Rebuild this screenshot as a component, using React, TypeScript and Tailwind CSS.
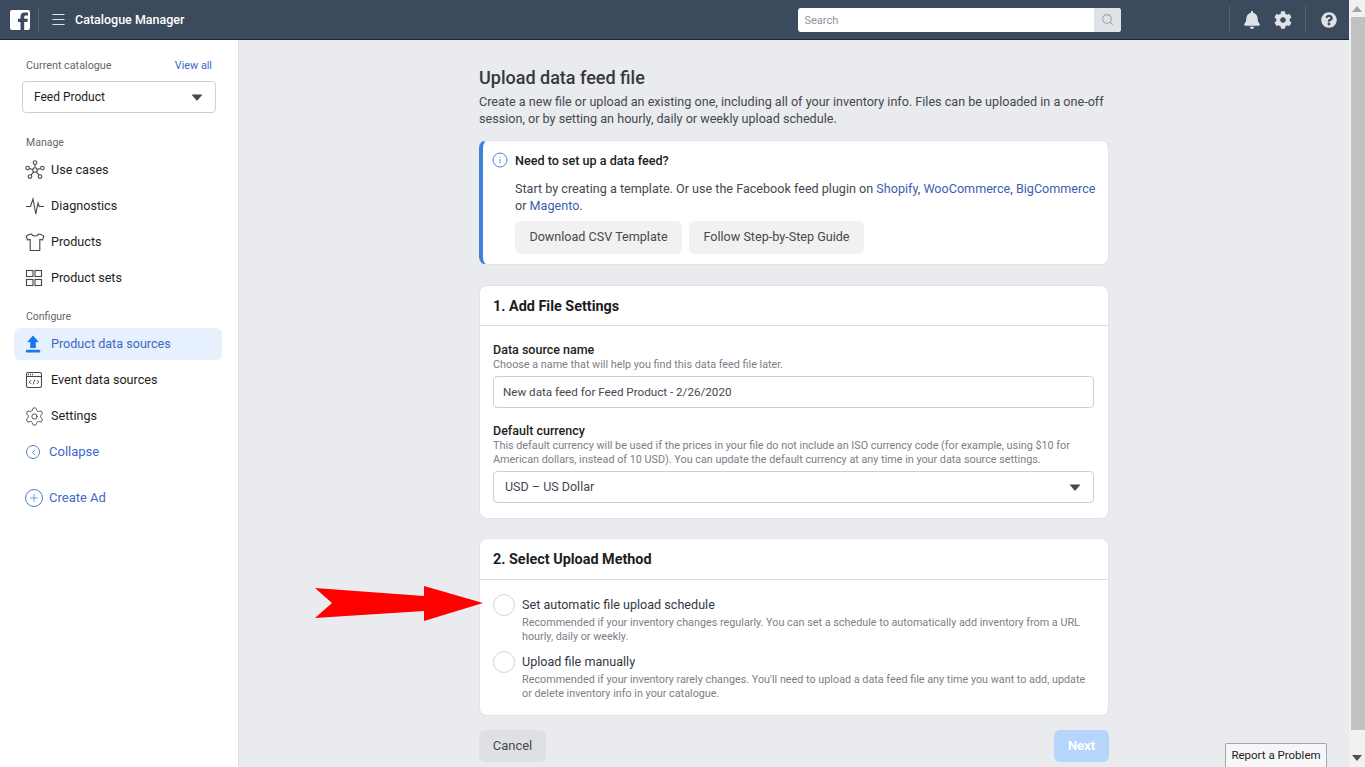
import React from 'react';
import { FaBell, FaCog, FaQuestionCircle } from 'react-icons/fa';
import { ChevronLeft, Menu, Plus, Search, Settings } from 'lucide-react';

const Caret = () => (
  <svg width="12" height="7" viewBox="0 0 12 7" className="shrink-0">
    <path d="M0.5 0.5h11L6.6 6.2a.8.8 0 0 1-1.2 0z" fill="#444950" />
  </svg>
);

const UseCasesIcon = () => (
  <svg width="20" height="20" viewBox="0 0 20 20" fill="none" stroke="#444950" strokeWidth="1.1">
    <circle cx="10" cy="10" r="2.2" />
    <circle cx="10" cy="2.6" r="1.8" />
    <circle cx="2.6" cy="8" r="1.8" />
    <circle cx="17.4" cy="8" r="1.8" />
    <circle cx="5" cy="16.6" r="1.8" />
    <circle cx="15" cy="16.6" r="1.8" />
    <path d="M10 4.4v3.4M4.4 8.5l3.5 1M15.6 8.5l-3.5 1M6 15l2.6-3.2M14 15l-2.6-3.2" />
  </svg>
);

const PulseIcon = () => (
  <svg width="20" height="20" viewBox="0 0 20 20" fill="none" stroke="#444950" strokeWidth="1.1">
    <path d="M1 10.500h4.500L8 3l2.800 15 2.200-11 1.300 3.500H19" />
  </svg>
);

const ShirtIcon = () => (
  <svg width="20" height="20" viewBox="0 0 20 20" fill="none" stroke="#444950" strokeWidth="1.1" strokeLinejoin="round">
    <path d="M6.500 2C4.500 2.300 2.500 3 1.200 4.200L2.500 8l2.700-.6V18.500h9.600V7.400l2.700.6 1.300-3.800C17.500 3 15.500 2.300 13.500 2c-.5 1.400-1.800 2-3.500 2s-3-.6-3.500-2z" />
  </svg>
);

const SetsIcon = () => (
  <svg width="18" height="18" viewBox="0 0 18 18" fill="none" stroke="#444950" strokeWidth="1.1">
    <rect x="1.500" y="1.500" width="6.500" height="6" />
    <rect x="10" y="1.500" width="6.500" height="6" />
    <rect x="1.500" y="10.500" width="6.500" height="6" />
    <rect x="10" y="10.500" width="6.500" height="6" />
  </svg>
);

const UploadIcon = () => (
  <svg width="16" height="18" viewBox="0 0 16 18" fill="#1877f2">
    <path d="M8 0.500l5.800 6.600H10.800V13H5.200V7.100H2.200z" />
    <rect x="0.800" y="14.800" width="14.400" height="2.600" rx="1.200" />
  </svg>
);

const EventIcon = () => (
  <svg width="18" height="18" viewBox="0 0 18 18" fill="none" stroke="#444950" strokeWidth="1.1">
    <rect x="1.500" y="1.500" width="15" height="15" rx="1.500" />
    <path d="M1.500 5.500h15" />
    <path d="M3 3.500h1M5 3.500h1M7 3.500h1" strokeWidth="1.3" />
    <path d="M6.200 9l-2 2 2 2M11.800 9l2 2-2 2M9.800 8.500l-1.600 5" strokeWidth="0.9" />
  </svg>
);

const Item = ({ icon, label, active }: { icon: React.ReactNode; label: string; active?: boolean }) => (
  <div className={`flex h-8 items-center rounded-md pl-[11px] text-[12.6px] ${active ? 'bg-[#e7f0fd] text-[#3b69c6]' : 'text-[#1c1e21]'}`}>
    <span className="flex w-[26px] shrink-0 justify-start">{icon}</span>
    <span>{label}</span>
  </div>
);

const Radio = () => <span className="mt-[-1px] h-[22px] w-[22px] shrink-0 rounded-full border border-[#d4d6da] bg-white" />;

const Card = ({ title, tall, children }: { title: string; tall?: boolean; children: React.ReactNode }) => (
  <section className="rounded-lg border border-[#e1e3e7] bg-white">
    <h2 className={`flex items-center border-b border-[#dadde1] px-[13px] text-[14.4px] font-bold text-[#1c1e21] ${tall ? 'h-[41px] pt-px' : 'h-10 pt-[2px]'}`}>{title}</h2>
    {children}
  </section>
);

export default function App() {
  return (
    <div className="relative flex h-[767px] w-[1365px] overflow-hidden bg-[#e9ebee] font-['Roboto',sans-serif] text-[13px]">
      <div className="flex min-w-0 flex-1 flex-col">
        {/* Top bar */}
        <header className="flex h-10 shrink-0 items-center border-b border-[#1d2733] bg-[#3b4a5c]">
          <div className="ml-[10px] h-5 w-5 overflow-hidden rounded-[2px] bg-white">
            <svg width="20" height="20" viewBox="0 0 20 20"><path d="M10.500 20v-8H8V8.800h2.500V6.500C10.500 3.800 12 2.500 14.500 2.500H18v3h-2.300c-1 0-1.500.5-1.500 1.500v1.800h3.700l-.5 3.200h-3.200v8z" fill="#3b4a5c" /></svg>
          </div>
          <div className="ml-2 h-[26px] w-px bg-[#56636f]" />
          <Menu size={17} color="#dfe3e8" strokeWidth={1.5} className="ml-[11px]" />
          <span className="ml-2 pt-px text-[12.5px] font-medium text-white">Catalogue Manager</span>
          <div className="ml-[613px] flex h-6 w-[323px] overflow-hidden rounded-[3px] bg-white">
            <span className="flex-1 pl-[7px] pt-px text-[11px] leading-6 text-[#8d949e]">Search</span>
            <span className="flex w-[27px] items-center justify-center bg-[#dfe3e8]"><Search size={13} color="#9aa3ad" /></span>
          </div>
          <div className="ml-[108px] h-[27px] w-px bg-[#56636f]" />
          <FaBell size={18} color="#dfe3e8" className="ml-[13px]" />
          <FaCog size={18} color="#dfe3e8" className="ml-[13px]" />
          <div className="ml-[13px] h-[27px] w-px bg-[#56636f]" />
          <FaQuestionCircle size={16} color="#dfe3e8" className="ml-[15px]" />
        </header>

        <div className="flex min-h-0 flex-1">
          {/* Sidebar */}
          <aside className="flex w-[239px] shrink-0 flex-col border-r border-[#dddfe2] bg-white pl-[14px] pr-4">
            <div className="mt-[19px] flex items-center justify-between pl-[12px] pr-[10px] text-[10.8px] leading-[14px]">
              <span className="text-[#606770]">Current catalogue</span>
              <span className="text-[#3b69c6]">View all</span>
            </div>
            <div className="ml-2 mt-2 flex h-8 w-[194px] items-center justify-between rounded-[4px] border border-[#ccd0d5] pl-[11px] pr-[12px] text-[12px] text-[#1c1e21]">
              Feed Product <Caret />
            </div>
            <div className="mb-1 mt-[23px] pl-[12px] text-[10.5px] leading-[14px] text-[#606770]">Manage</div>
            <div className="flex flex-col gap-1">
              <Item label="Use cases" icon={<UseCasesIcon />} />
              <Item label="Diagnostics" icon={<PulseIcon />} />
              <Item label="Products" icon={<ShirtIcon />} />
              <Item label="Product sets" icon={<SetsIcon />} />
            </div>
            <div className="mb-1 mt-4 pl-[12px] text-[10.5px] leading-[14px] text-[#606770]">Configure</div>
            <div className="flex flex-col gap-1">
              <Item active label="Product data sources" icon={<UploadIcon />} />
              <Item label="Event data sources" icon={<EventIcon />} />
              <Item label="Settings" icon={<Settings size={21} color="#444950" strokeWidth={1.1} className="ml-[-1px]" />} />
            </div>
            <div className="mt-1 flex h-8 items-center pl-[12px] text-[#3b69c6]">
              <span className="mr-[9px] flex h-[14px] w-[14px] items-center justify-center rounded-full border border-[#5b7fcc]"><ChevronLeft size={9} /></span>
              Collapse
            </div>
            <div className="mt-[14px] flex h-8 items-center pl-[11px] text-[#3b69c6]">
              <span className="mr-[6px] flex h-[18px] w-[18px] items-center justify-center rounded-full border border-[#4a80d8]"><Plus size={12} strokeWidth={1.3} /></span>
              Create Ad
            </div>
          </aside>

          {/* Main */}
          <main className="min-w-0 flex-1">
            <div className="mx-auto w-[630px] pt-[26px]">
              <h1 className="text-[18px] font-medium leading-6 text-[#333941]">Upload data feed file</h1>
              <p className="mt-[3px] text-[12.6px] leading-[17px] text-[#444950]">
                Create a new file or upload an existing one, including all of your inventory info. Files can be uploaded in a one-off session, or by setting an hourly, daily or weekly upload schedule.
              </p>

              <section className="mt-[13px] flex h-[125px] rounded-lg border border-[#e1e3e7] border-l-4 border-l-[#4080dd] bg-white pl-[9px]">
                <svg width="16" height="16" viewBox="0 0 16 16" fill="none" className="mt-[11px] shrink-0">
                  <circle cx="8" cy="8" r="7" stroke="#4a80d8" />
                  <path d="M8 7v4.500M8 4.500v1" stroke="#8fa9d8" strokeWidth="1.3" />
                </svg>
                <div className="ml-[7px] flex-1 pt-[11px] text-[12.6px] text-[#444950]">
                  <div className="font-medium leading-[17px] text-[#1c1e21]">Need to set up a data feed?</div>
                  <p className="mt-[11px] leading-[17px]">
                    Start by creating a template. Or use the Facebook feed plugin on <span className="text-[#3b5fb0]">Shopify</span>, <span className="text-[#3b5fb0]">WooCommerce</span>, <span className="text-[#3b5fb0]">BigCommerce</span> or <span className="text-[#3b5fb0]">Magento</span>.
                  </p>
                  <div className="mt-[7px] flex gap-[7px]">
                    <span className="flex h-[33px] w-[167px] items-center justify-center rounded-md bg-[#f1f1f1] text-[#444950]">Download CSV Template</span>
                    <span className="flex h-[33px] w-[175px] items-center justify-center rounded-md bg-[#f1f1f1] text-[#444950]">Follow Step-by-Step Guide</span>
                  </div>
                </div>
              </section>

              <div className="mt-5">
                <Card title="1. Add File Settings">
                  <div className="h-[192px] pl-[13px] pr-[14px] pt-4">
                    <div className="text-[12.5px] font-medium leading-4 text-[#1c1e21]">Data source name</div>
                    <div className="text-[10.8px] leading-[13px] text-[#7b8087]">Choose a name that will help you find this data feed file later.</div>
                    <div className="mt-[5px] flex h-8 items-center rounded-[4px] border border-[#ccd0d5] pl-[9px] pt-px text-[11.65px] text-[#444950]">New data feed for Feed Product - 2/26/2020</div>
                    <div className="mt-[15px] text-[12.5px] font-medium leading-4 text-[#1c1e21]">Default currency</div>
                    <div className="text-[10.8px] leading-[14px] text-[#7b8087]">
                      This default currency will be used if the prices in your file do not include an ISO currency code (for example, using $10 for American dollars, instead of 10 USD). You can update the default currency at any time in your data source settings.
                    </div>
                    <div className="mt-1 flex h-8 items-center justify-between rounded-[4px] border border-[#ccd0d5] pl-[11px] pr-3 text-[12.5px] text-[#444950]">USD – US Dollar <Caret /></div>
                  </div>
                </Card>
              </div>

              <div className="mt-[19px]">
                <Card title="2. Select Upload Method" tall>
                  <div className="h-[135px] pl-[13px] pr-[14px] pt-[15px]">
                    <div className="flex gap-[7px]">
                      <Radio />
                      <div>
                        <div className="text-[12.6px] leading-[19px] text-[#333941]">Set automatic file upload schedule</div>
                        <p className="mt-[2px] text-[10.8px] leading-[14px] text-[#7b8087]">Recommended if your inventory changes regularly. You can set a schedule to automatically add inventory from a URL hourly, daily or weekly.</p>
                      </div>
                    </div>
                    <div className="mt-2 flex gap-[7px]">
                      <Radio />
                      <div>
                        <div className="text-[12.6px] leading-[19px] text-[#333941]">Upload file manually</div>
                        <p className="mt-[2px] text-[10.8px] leading-[14px] text-[#7b8087]">Recommended if your inventory rarely changes. You'll need to upload a data feed file any time you want to add, update or delete inventory info in your catalogue.</p>
                      </div>
                    </div>
                  </div>
                </Card>
              </div>

              <div className="mt-[14px] flex justify-between">
                <span className="flex h-8 w-[67px] items-center justify-center rounded-md bg-[#dfe0e3] text-[#444950]">Cancel</span>
                <span className="flex h-8 w-[55px] items-center justify-center rounded-md bg-[#b5d5fb] font-bold text-white">Next</span>
              </div>
            </div>
          </main>
        </div>
      </div>

      {/* Browser scrollbar */}
      <div className="flex w-[16px] shrink-0 flex-col bg-[#f1f1f1]">
        <svg width="10" height="6" viewBox="0 0 10 6" className="ml-[3px] mt-[6px]"><path d="M5 0l5 6H0z" fill="#a3a3a3" /></svg>
        <div className="ml-[2px] mt-[5px] h-[713px] w-[14px] bg-[#c1c1c1]" />
        <svg width="10" height="6" viewBox="0 0 10 6" className="ml-[3px] mt-[25px]"><path d="M0 0h10L5 6z" fill="#505050" /></svg>
      </div>

      {/* Overlays */}
      <svg width="172" height="38" viewBox="0 0 172 38" className="absolute left-[315px] top-[585px]">
        <path d="M0 3L109 11L109 1L168 18L109 36L109 26L0 33L17 18z" fill="#ff0000" />
      </svg>
      <div className="absolute left-[1225px] top-[743px] flex h-[24px] w-[102px] items-center justify-center rounded-t-[2px] border border-b-0 border-[#a6a8ab] bg-[#f5f6f7] pt-px text-[11.5px] text-[#1c1e21]">Report a Problem</div>
    </div>
  );
}
